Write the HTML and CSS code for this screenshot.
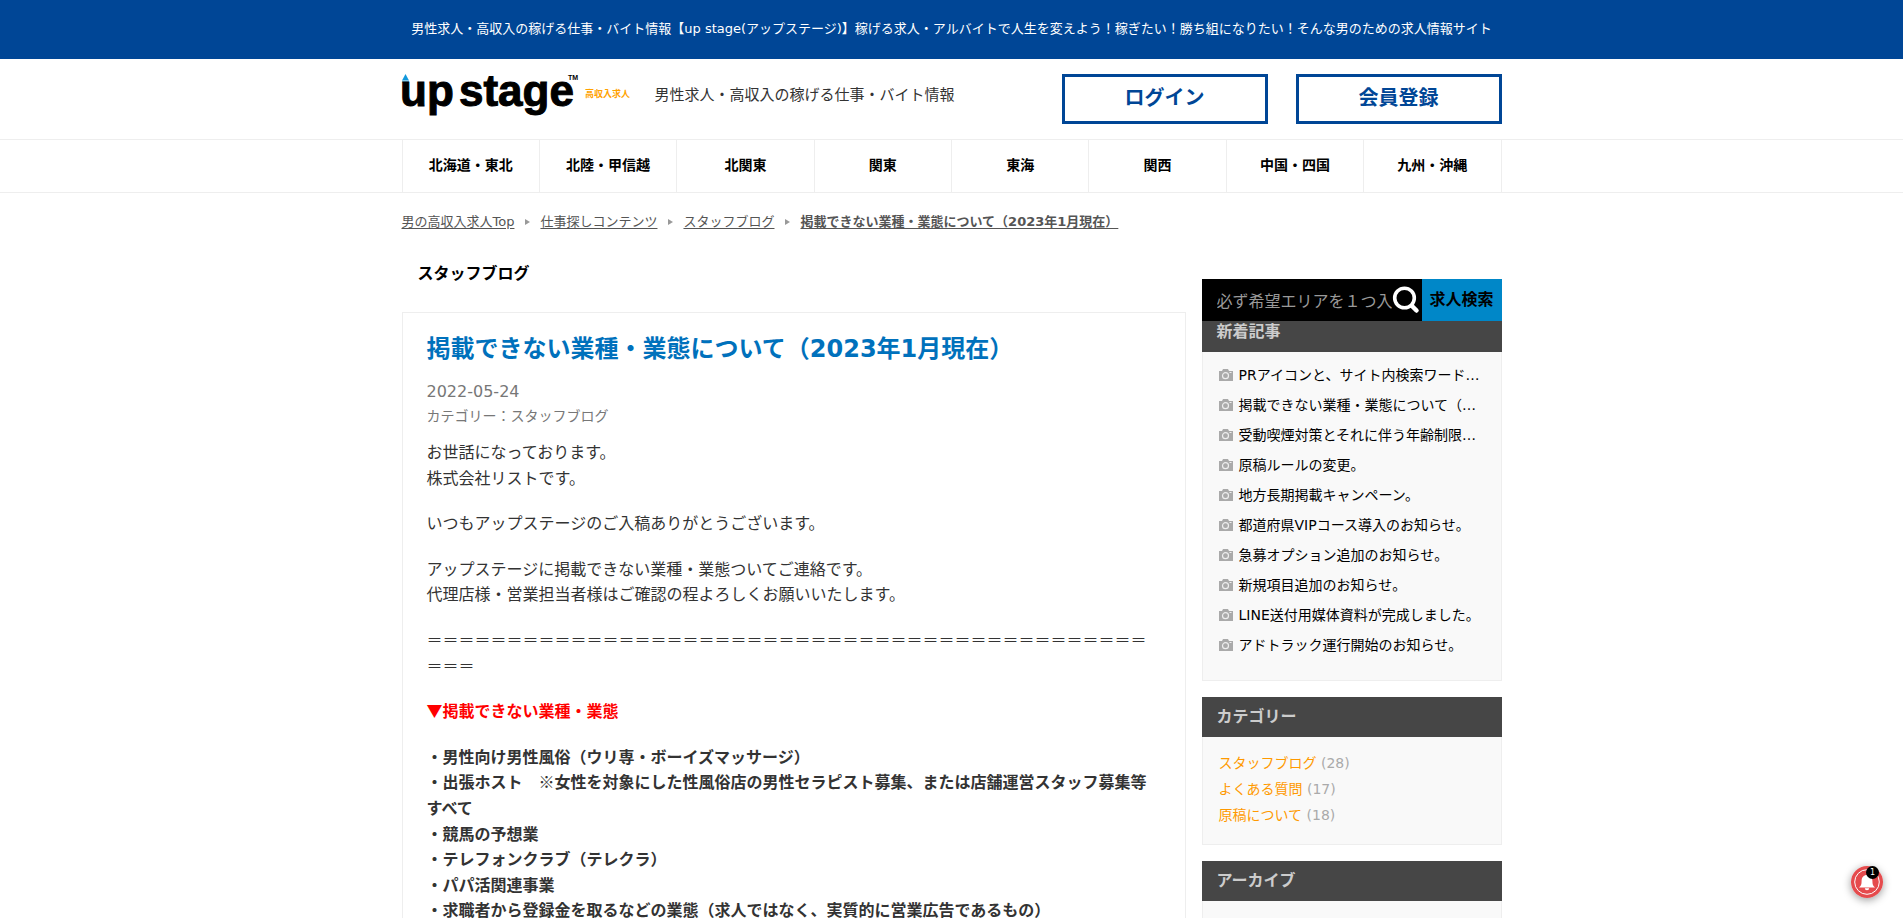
FILE: index.html
```html
<!DOCTYPE html>
<html lang="ja">
<head>
<meta charset="utf-8">
<title>掲載できない業種・業態について（2023年1月現在）</title>
<link rel="stylesheet" href="styles.css">
</head>
<body>
<svg class="defs" aria-hidden="true">
  <symbol id="camera" viewBox="0 0 14 12">
    <path fill="#aaa" d="M0 2h3l1-2h5l1 2h4v10H0z"/>
    <circle cx="6.5" cy="6.7" r="3" fill="none" stroke="#eee" stroke-width="1.2"/>
    <path d="M10.5 3.5h2" stroke="#eee"/>
  </symbol>
</svg>
<p class="lead">男性求人・高収入の稼げる仕事・バイト情報【up stage(アップステージ)】稼げる求人・アルバイトで人生を変えよう！稼ぎたい！勝ち組になりたい！そんな男のための求人情報サイト</p>
<header class="header wrap">
  <a class="logo" href="#" aria-label="up stage">
    <svg width="229" height="50" viewBox="0 0 229 50">
      <path d="M0 6.500L3.500 0 7 6.500z" fill="#1298dc"/>
      <path d="M0 6.500h7v2H0z" fill="#7cc8ee"/>
      <g class="logo-word"><text x="-2" y="32">up</text><text x="57" y="32">stage</text></g>
      <text class="logo-tm" x="166" y="6">TM</text>
      <text class="logo-sub" x="183" y="23">高収入求人</text>
    </svg>
  </a>
  <p class="tagline">男性求人・高収入の稼げる仕事・バイト情報</p>
  <div class="account">
    <a class="account-link" href="#">ログイン</a>
    <a class="account-link" href="#">会員登録</a>
  </div>
</header>
<nav class="nav">
  <div class="nav-list wrap">
    <a href="#">北海道・東北</a><a href="#">北陸・甲信越</a><a href="#">北関東</a><a href="#">関東</a><a href="#">東海</a><a href="#">関西</a><a href="#">中国・四国</a><a href="#">九州・沖縄</a>
  </div>
</nav>
<div class="crumbs wrap">
  <a href="#">男の高収入求人Top</a><i></i><a href="#">仕事探しコンテンツ</a><i></i><a href="#">スタッフブログ</a><i></i><a class="current" href="#">掲載できない業種・業態について（2023年1月現在）</a>
</div>
<div class="columns wrap">
  <main class="main">
    <h2 class="section-title">スタッフブログ</h2>
    <article class="article">
      <h1>掲載できない業種・業態について（2023年1月現在）</h1>
      <p class="date">2022-05-24</p>
      <p class="category">カテゴリー：スタッフブログ</p>
      <div class="body">
        <p>お世話になっております。<br>株式会社リストです。</p>
        <p>いつもアップステージのご入稿ありがとうございます。</p>
        <p>アップステージに掲載できない業種・業態ついてご連絡です。<br>代理店様・営業担当者様はご確認の程よろしくお願いいたします。</p>
        <p class="rule">＝＝＝＝＝＝＝＝＝＝＝＝＝＝＝＝＝＝＝＝＝＝＝＝＝＝＝＝＝＝＝＝＝＝＝＝＝＝＝＝＝＝＝＝＝＝＝＝</p>
        <p class="alert">▼掲載できない業種・業態</p>
        <p class="strong">・男性向け男性風俗（ウリ専・ボーイズマッサージ）<br>・出張ホスト　※女性を対象にした性風俗店の男性セラピスト募集、または店舗運営スタッフ募集等すべて<br>・競馬の予想業<br>・テレフォンクラブ（テレクラ）<br>・パパ活関連事業<br>・求職者から登録金を取るなどの業態（求人ではなく、実質的に営業広告であるもの）</p>
      </div>
    </article>
  </main>
  <aside class="side">
    <form class="search">
      <input type="text" aria-label="求人検索" placeholder="必ず希望エリアを１つ入力">
      <svg width="28" height="28" viewBox="0 0 28 28" fill="none" stroke="#fff" stroke-linecap="round"><circle cx="12.500" cy="12" r="9.800" stroke-width="3.600"/><path d="M20 20l4.500 4.500" stroke-width="4.500"/></svg>
      <button type="submit">求人検索</button>
    </form>
    <section class="panel">
      <h3>新着記事</h3>
      <ul class="posts">
        <li><svg><use href="#camera"/></svg><a href="#">PRアイコンと、サイト内検索ワード…</a></li>
        <li><svg><use href="#camera"/></svg><a href="#">掲載できない業種・業態について（…</a></li>
        <li><svg><use href="#camera"/></svg><a href="#">受動喫煙対策とそれに伴う年齢制限…</a></li>
        <li><svg><use href="#camera"/></svg><a href="#">原稿ルールの変更。</a></li>
        <li><svg><use href="#camera"/></svg><a href="#">地方長期掲載キャンペーン。</a></li>
        <li><svg><use href="#camera"/></svg><a href="#">都道府県VIPコース導入のお知らせ。</a></li>
        <li><svg><use href="#camera"/></svg><a href="#">急募オプション追加のお知らせ。</a></li>
        <li><svg><use href="#camera"/></svg><a href="#">新規項目追加のお知らせ。</a></li>
        <li><svg><use href="#camera"/></svg><a href="#">LINE送付用媒体資料が完成しました。</a></li>
        <li><svg><use href="#camera"/></svg><a href="#">アドトラック運行開始のお知らせ。</a></li>
      </ul>
    </section>
    <section class="panel">
      <h3>カテゴリー</h3>
      <ul class="cats">
        <li><a href="#">スタッフブログ</a> (28)</li>
        <li><a href="#">よくある質問</a> (17)</li>
        <li><a href="#">原稿について</a> (18)</li>
      </ul>
    </section>
    <section class="panel">
      <h3>アーカイブ</h3>
      <ul class="cats"></ul>
    </section>
  </aside>
</div>
<button class="bell" type="button" aria-label="通知">
  <svg width="32" height="32" viewBox="0 0 32 32">
    <circle cx="16" cy="16" r="16" fill="#e54b4d"/>
    <circle cx="16" cy="16" r="12.300" fill="none" stroke="#fff"/>
    <path fill="#fff" d="M8 21.500c2-1.500 2.600-3 2.600-6.500 0-3.600 2-6 5.400-6s5.400 2.400 5.400 6c0 3.500.6 5 2.600 6.500zM13.800 22.300h4.400a2.200 2 0 0 1-4.400 0z"/>
  </svg>
  <span class="badge">1</span>
</button>
</body>
</html>
```
FILE: styles.css
```css
* { box-sizing: border-box; }
body {
  margin: 0;
  height: 100vh;
  overflow: hidden;
  background: #fff;
  color: #333;
  font-family: "DejaVu Sans", "Noto Sans CJK JP", sans-serif;
  font-size: 16px;
  text-spacing-trim: space-all;
}
p, h1, h2, h3, ul { margin: 0; padding: 0; }
ul { list-style: none; }
a { color: inherit; text-decoration: none; }
.defs { display: none; }
.wrap { width: 100%; max-width: 1100px; margin: 0 auto; }
.lead {
  background: #004696;
  color: #fff;
  font-size: 13px;
  line-height: 19px;
  padding: 19px 0 21px;
  text-align: center;
}
.header { display: flex; align-items: flex-start; padding: 15px 0; }
.logo svg { display: block; overflow: visible; }
.logo-word { font: bold 44px "Liberation Sans", sans-serif; fill: #000; stroke: #000; stroke-width: 1px; }
.logo-tm { font: bold 7px "Liberation Sans", sans-serif; fill: #000; }
.logo-sub { font-size: 9px; font-weight: bold; fill: #ffa200; }
.tagline { margin-left: 24px; font-size: 15px; line-height: 42px; }
.account { display: flex; gap: 28px; margin-left: auto; }
.account-link {
  width: 206px;
  height: 50px;
  border: 3px solid #004696;
  color: #004696;
  font-size: 20px;
  font-weight: bold;
  line-height: 42px;
  text-align: center;
}
.nav { border: solid #eee; border-width: 1px 0; }
.nav-list { display: flex; border-right: 1px solid #eee; }
.nav-list a {
  flex: 1;
  padding-bottom: 2px;
  border-left: 1px solid #eee;
  color: #000;
  font-size: 14px;
  font-weight: bold;
  line-height: 50px;
  text-align: center;
}
.crumbs { display: flex; align-items: center; padding-top: 18px; font-size: 13px; line-height: 22px; color: #555; }
.crumbs a { text-decoration: underline; text-underline-offset: 2px; }
.crumbs i { margin: 0 10px 0 11px; border: solid transparent; border-width: 3px 0 3px 5px; border-left-color: #999; }
.current { font-weight: bold; }
.columns { display: flex; align-items: flex-start; gap: 16px; }
.main { flex: 1; min-width: 0; }
.section-title { padding: 28px 16px 26px; color: #000; font-size: 16px; line-height: 25px; }
.article { border: 1px solid #eee; padding: 18px 24px 60px; }
.article h1 { color: #0071bc; font-size: 24px; line-height: 36px; }
.date { margin-top: 12px; color: #777; line-height: 25px; }
.category { color: #777; font-size: 14px; line-height: 25px; }
.body { padding-top: 10px; font-family: "Noto Sans CJK JP", sans-serif; line-height: 1.6; }
.body p { margin-bottom: 20px; }
.rule { word-break: break-all; }
.alert { color: red; font-weight: bold; }
.strong { font-weight: bold; }
.side { position: relative; width: 300px; padding-top: 79px; }
.search { position: absolute; top: 46px; left: 0; display: flex; width: 300px; height: 42px; background: #000; }
.search input {
  flex: 1;
  min-width: 0;
  border: 0;
  padding: 0 0 0 15px;
  background: #000;
  color: #fff;
  font: 16px "Noto Sans CJK JP", sans-serif;
}
.search input::placeholder { color: #999; }
.search svg { margin: 7px 2px 0 0; }
.search button { width: 80px; border: 0; padding: 0 0 4px; background: #0087c8; color: #000; font: bold 16px "Noto Sans CJK JP", sans-serif; }
.panel { margin-bottom: 16px; }
.panel h3 { padding-left: 15px; background: #464646; color: #ccc; font-size: 16px; line-height: 40px; }
.panel ul { border: solid #eee; border-width: 0 1px 1px; background: #f9f9f9; }
.posts { padding: 8px 0 20px 16px; font-size: 14px; line-height: 30px; color: #000; }
.posts li { display: flex; align-items: center; gap: 6px; white-space: nowrap; }
.posts svg { width: 14px; height: 12px; flex: none; }
.cats { min-height: 90px; padding: 13px 16px 16px; font-size: 14px; line-height: 26px; color: #aaa; }
.cats a { color: #f90; }
.bell { position: fixed; right: 20px; bottom: 20px; width: 32px; height: 32px; border: 0; border-radius: 50%; padding: 0; background: none; box-shadow: 0 2px 8px rgba(0, 0, 0, .4); }
.bell svg { display: block; }
.badge { position: absolute; top: 0; right: 4px; width: 13px; height: 13px; border-radius: 50%; background: #000; color: #fff; font: 8px/13px "DejaVu Sans", sans-serif; text-align: center; }
```
